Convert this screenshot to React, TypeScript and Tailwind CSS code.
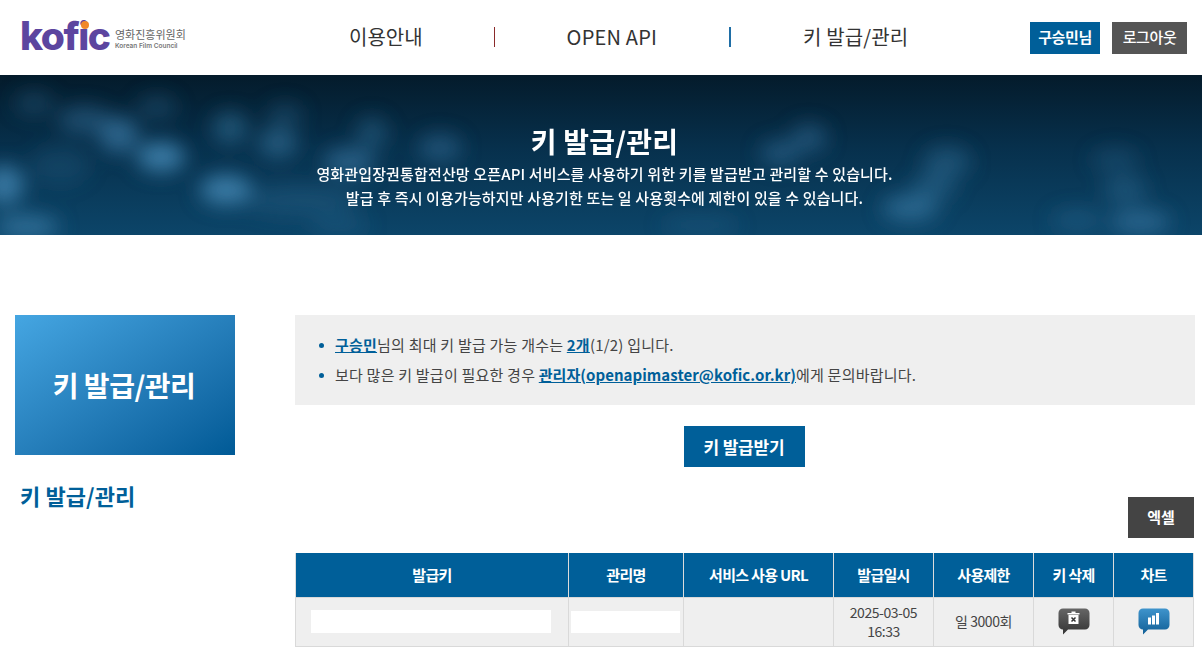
import React from 'react';

const FONT = "font-['Noto_Sans_CJK_KR','Noto_Sans',sans-serif]";

const columns = [
  { label: '발급키', width: 'w-[273px]' },
  { label: '관리명', width: 'w-[115px]' },
  { label: '서비스 사용 URL', width: 'w-[150px]' },
  { label: '발급일시', width: 'w-[100px]' },
  { label: '사용제한', width: 'w-[100px]' },
  { label: '키 삭제', width: 'w-[80px]' },
  { label: '차트', width: 'w-[80px]' },
];

// soft out-of-focus spots in the banner photo: x, y, rx, ry, opacity
const blobs = [
  [161, 82, 24, 15, 1], [226, 115, 26, 15, 1], [119, 60, 20, 18, 0.7], [230, 53, 18, 16, 0.5], [278, 68, 20, 15, 0.55],
  [372, 58, 16, 16, 0.4], [440, 73, 22, 14, 0.45], [349, 87, 26, 14, 0.6], [27, 152, 32, 12, 0.75], [4, 110, 20, 20, 0.9],
  [157, 32, 20, 12, 0.3], [34, 28, 20, 12, 0.3], [84, 45, 26, 14, 0.45], [285, 40, 18, 12, 0.3],
  [809, 63, 18, 14, 0.45], [780, 78, 20, 13, 0.45], [947, 87, 24, 16, 0.4], [933, 112, 22, 14, 0.4], [910, 133, 28, 13, 0.65],
  [1115, 85, 24, 12, 0.25], [1125, 115, 22, 14, 0.35], [1140, 147, 30, 12, 0.6], [1077, 145, 26, 11, 0.3], [700, 150, 40, 8, 0.25],
  [340, 150, 30, 8, 0.3], [300, 125, 60, 16, 0.25], [60, 90, 30, 20, 0.2],
];

const BannerArt = () => (
  <svg className="absolute inset-0 h-full w-full" viewBox="0 0 1202 160" preserveAspectRatio="none">
    <defs>
      <linearGradient id="bannerBg" x1="0" y1="0" x2="0" y2="1">
        <stop offset="0%" stopColor="#041b2b" />
        <stop offset="45%" stopColor="#07304c" />
        <stop offset="100%" stopColor="#0c4569" />
      </linearGradient>
      <filter id="soft" x="-100%" y="-100%" width="300%" height="300%">
        <feGaussianBlur stdDeviation="10" />
      </filter>
    </defs>
    <rect width="1202" height="160" fill="url(#bannerBg)" />
    <g filter="url(#soft)" fill="#3a7ba6">
      {blobs.map(([x, y, rx, ry, o], i) => (
        <ellipse key={i} cx={x} cy={y} rx={rx} ry={ry} opacity={o} />
      ))}
    </g>
  </svg>
);

const Logo = () => (
  <div className="flex items-center">
    <div className="relative w-[88px] h-[40px]">
      <span className="absolute left-[-2px] top-[-5px] font-['Inter',sans-serif] text-[39px] leading-[46px] font-extrabold tracking-[-1.5px] text-[#5c459f]">kofic</span>
      <span className="absolute left-[59px] top-[3px] w-[8px] h-[8px] rounded-full bg-[#f0872a]" />
    </div>
    <div className="ml-[5px] mt-[2px] flex flex-col items-start">
      <span className="text-[11px] leading-[14px] text-[#666]">영화진흥위원회</span>
      <span className="font-['Inter',sans-serif] text-[6.5px] leading-[10px] font-semibold text-[#777]">Korean Film Council</span>
    </div>
  </div>
);

const ChatIcon = ({ kind }: { kind: 'trash' | 'chart' }) => (
  <svg width="32" height="27" viewBox="0 0 32 27">
    <defs>
      <linearGradient id="trashBg" x1="0" y1="0" x2="0" y2="1">
        <stop offset="0%" stopColor="#666" />
        <stop offset="100%" stopColor="#333" />
      </linearGradient>
      <linearGradient id="chartBg" x1="0" y1="0" x2="0" y2="1">
        <stop offset="0%" stopColor="#3f94cc" />
        <stop offset="100%" stopColor="#115f96" />
      </linearGradient>
    </defs>
    <path
      d="M5 0.5h22a4.5 4.5 0 0 1 4.5 4.5v12a4.5 4.5 0 0 1-4.5 4.5H10l-5 5v-5a4.5 4.5 0 0 1-4.5-4.5V5A4.5 4.5 0 0 1 5 0.5z"
      fill={kind === 'trash' ? 'url(#trashBg)' : 'url(#chartBg)'}
    />
    {kind === 'trash' ? (
      <g>
        <path d="M9.5 5h12v1.5h-12zM13.5 3.5h4V5h-4z" fill="#fff" />
        <path d="M10.5 7h10v9h-10z" fill="#fff" />
        <path d="M13.5 9.5l4 4M17.5 9.5l-4 4" stroke="#333" strokeWidth="1.5" />
      </g>
    ) : (
      <path d="M10 9.5h3v7h-3zM14 7.5h3v9h-3zM18 5h3v11.5h-3z" fill="#fff" />
    )}
  </svg>
);

export default function App() {
  return (
    <div className={`${FONT} w-[1202px] h-[665px] overflow-hidden bg-white text-[#333]`}>
      <header className="flex h-[75px] items-center">
        <div className="ml-[22px] w-[300px]">
          <Logo />
        </div>
        <nav className="relative top-[-1px] flex items-center text-[20px] text-[#333]">
          <span className="ml-[27px]">이용안내</span>
          <span className="ml-[71px] h-[20px] w-px bg-[#8a2a2a]" />
          <span className="ml-[72px] tracking-[0.2px]">OPEN API</span>
          <span className="ml-[72px] h-[20px] w-[2px] bg-[#1f6ea6]" />
          <span className="ml-[72px] tracking-[0.1px]">키 발급/관리</span>
        </nav>
        <div className="ml-auto mr-[15px] flex gap-[12px]">
          <span className="flex h-[32px] w-[70px] items-center justify-center bg-[#005f99] text-[15px] font-bold tracking-[-0.4px] text-white">구승민님</span>
          <span className="flex h-[32px] w-[75px] items-center justify-center bg-[#555] text-[15px] font-medium tracking-[-0.4px] text-white">로그아웃</span>
        </div>
      </header>

      <section className="relative flex h-[160px] flex-col items-center overflow-hidden pl-[7px] text-white">
        <BannerArt />
        <h1 className="relative mt-[46px] text-[28px] leading-[40px] font-bold tracking-[0.2px]">키 발급/관리</h1>
        <p className="relative mt-[1px] text-center text-[15px] leading-[24px] font-medium tracking-[0.14px]">
          영화관입장권통합전산망 오픈API 서비스를 사용하기 위한 키를 발급받고 관리할 수 있습니다.
          <br />
          발급 후 즉시 이용가능하지만 사용기한 또는 일 사용횟수에 제한이 있을 수 있습니다.
        </p>
      </section>

      <div className="flex pt-[80px]">
        <aside className="ml-[15px] w-[220px]">
          <div className="flex h-[140px] items-center justify-center bg-gradient-to-br from-[#45a6e2] to-[#005a96] pr-[2px] text-[28px] font-bold tracking-[-0.5px] text-white">
            키 발급/관리
          </div>
          <div className="mt-[22px] ml-[5px] text-[22px] leading-[36px] font-bold tracking-[0.1px] text-[#005f99]">키 발급/관리</div>
        </aside>

        <main className="ml-[60px] w-[900px]">
          <div className="h-[90px] bg-[#efefef] pt-[15px] pl-[24px] text-[15px] leading-[30px] tracking-[0.22px] text-[#444]">
            <ul className="list-none">
              <li className="flex items-center">
                <span className="mr-[11px] h-[5px] w-[5px] rounded-full bg-[#005f99]" />
                <span><a className="font-bold text-[#005f99] underline">구승민</a>님의 최대 키 발급 가능 개수는 <a className="font-bold text-[#005f99] underline">2개</a>(1/2) 입니다.</span>
              </li>
              <li className="flex items-center">
                <span className="mr-[11px] h-[5px] w-[5px] rounded-full bg-[#005f99]" />
                <span>보다 많은 키 발급이 필요한 경우 <a className="font-bold tracking-[0.05px] text-[#005f99] underline">관리자(openapimaster@kofic.or.kr)</a>에게 문의바랍니다.</span>
              </li>
            </ul>
          </div>

          <div className="mt-[21px] flex justify-center pr-[2px]">
            <button className="h-[41px] w-[121px] bg-[#005f99] text-[17px] font-bold tracking-[-0.2px] text-white">키 발급받기</button>
          </div>

          <div className="mt-[30px] flex justify-end pr-px">
            <button className="h-[41px] w-[66px] bg-[#444] text-[15px] font-bold text-white">엑셀</button>
          </div>

          <table className="mt-[15px] w-[899px] table-fixed border-collapse">
            <thead>
              <tr className="h-[44px] bg-[#005f99] text-[15px] font-bold tracking-[-0.7px] text-white">
                {columns.map((c) => (
                  <th key={c.label} className={`${c.width} border-x border-[#dcdcdc] font-bold`}>{c.label}</th>
                ))}
              </tr>
            </thead>
            <tbody>
              <tr className="h-[49px] bg-[#efefef] text-center text-[14px] leading-[19px] text-[#444]">
                <td className="border border-[#d9d9d9] pl-[15px] pr-[17px]"><div className="h-[23px] bg-white" /></td>
                <td className="border border-[#d9d9d9] pl-[2px] pr-[3px]"><div className="mt-px h-[22px] bg-white" /></td>
                <td className="border border-[#d9d9d9]" />
                <td className="border border-[#d9d9d9] tracking-[-0.45px]">2025-03-05<br />16:33</td>
                <td className="border border-[#d9d9d9] tracking-[-0.45px]">일 3000회</td>
                <td className="border border-[#d9d9d9]"><div className="flex justify-center"><ChatIcon kind="trash" /></div></td>
                <td className="border border-[#d9d9d9]"><div className="flex justify-center"><ChatIcon kind="chart" /></div></td>
              </tr>
            </tbody>
          </table>
        </main>
      </div>
    </div>
  );
}
